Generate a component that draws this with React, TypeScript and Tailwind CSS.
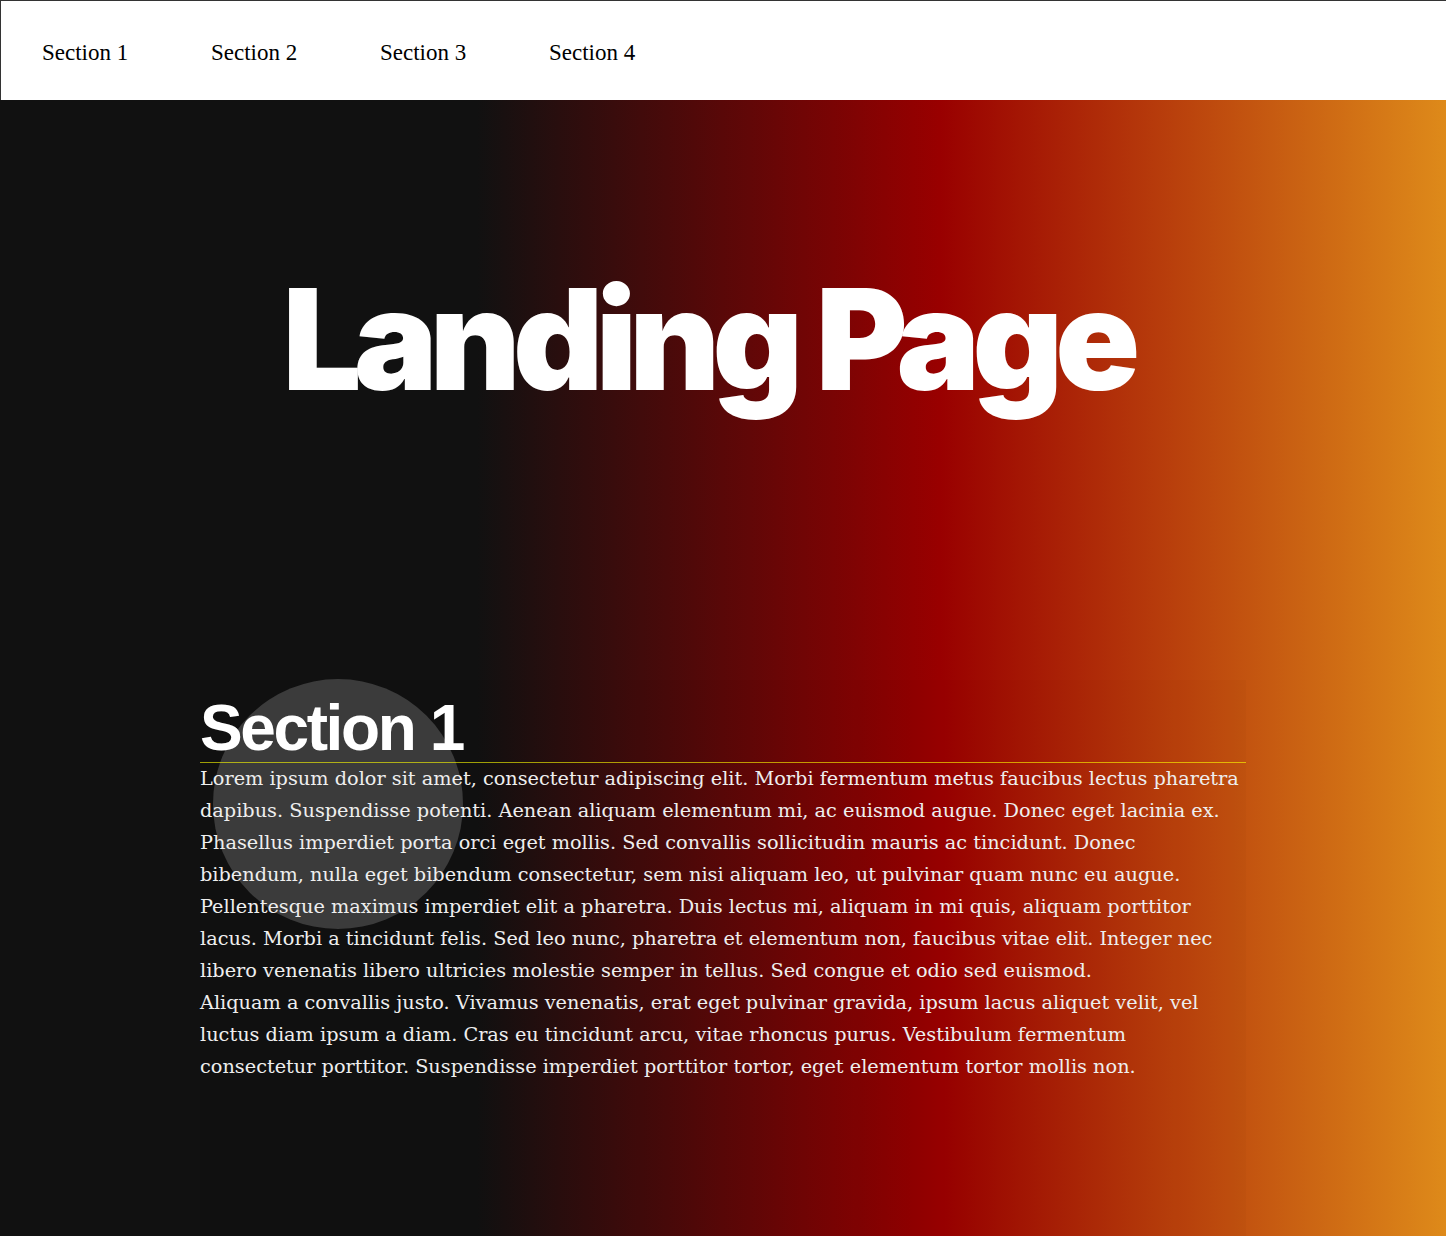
import React from 'react'

const NAV = ['Section 1', 'Section 2', 'Section 3', 'Section 4']

const P1 =
  'Lorem ipsum dolor sit amet, consectetur adipiscing elit. Morbi fermentum metus faucibus lectus pharetra dapibus. Suspendisse potenti. Aenean aliquam elementum mi, ac euismod augue. Donec eget lacinia ex. Phasellus imperdiet porta orci eget mollis. Sed convallis sollicitudin mauris ac tincidunt. Donec bibendum, nulla eget bibendum consectetur, sem nisi aliquam leo, ut pulvinar quam nunc eu augue. Pellentesque maximus imperdiet elit a pharetra. Duis lectus mi, aliquam in mi quis, aliquam porttitor lacus. Morbi a tincidunt felis. Sed leo nunc, pharetra et elementum non, faucibus vitae elit. Integer nec libero venenatis libero ultricies molestie semper in tellus. Sed congue et odio sed euismod.'

const P2 =
  'Aliquam a convallis justo. Vivamus venenatis, erat eget pulvinar gravida, ipsum lacus aliquet velit, vel luctus diam ipsum a diam. Cras eu tincidunt arcu, vitae rhoncus purus. Vestibulum fermentum consectetur porttitor. Suspendisse imperdiet porttitor tortor, eget elementum tortor mollis non.'

export default function App() {
  return (
    <div className="min-h-[1236px] bg-[linear-gradient(to_right,#111111_33%,#990000_65%,#de8a1a_100%)]">
      {/* nav */}
      <nav className="h-[100px] bg-white border-t border-l border-[#333] flex items-center pl-[41px] pt-[5px]">
        {NAV.map((n) => (
          <a key={n} href="#" className="w-[169px] shrink-0 text-[23px] text-black font-['Liberation_Serif',serif]">
            {n}
          </a>
        ))}
      </nav>

      {/* hero */}
      <header className="pt-[169px] pr-[31px] text-center">
        <h1 className="text-[140px] leading-none font-black tracking-[-0.055em] text-white font-['Inter',sans-serif]">Landing Page</h1>
      </header>

      {/* section 1 */}
      <section className="relative mt-[271px] mx-[200px] pt-[16px] pb-[160px] bg-black/[0.015]">
        <div className="absolute left-[13px] top-[-1px] w-[250px] h-[250px] rounded-full bg-white/[0.18]" />
        <h2 className="relative text-[64px] leading-none font-bold tracking-[-2.4px] text-white pb-[2px] border-b border-[#ffff00]/60 font-['Liberation_Sans',Arial,sans-serif]">
          Section 1
        </h2>
        <div className="relative pr-[4px] text-[19.3px] leading-[32px] text-[#eeeeee] font-['DejaVu_Serif',serif]">
          <p>{P1}</p>
          <p>{P2}</p>
        </div>
      </section>
    </div>
  )
}
